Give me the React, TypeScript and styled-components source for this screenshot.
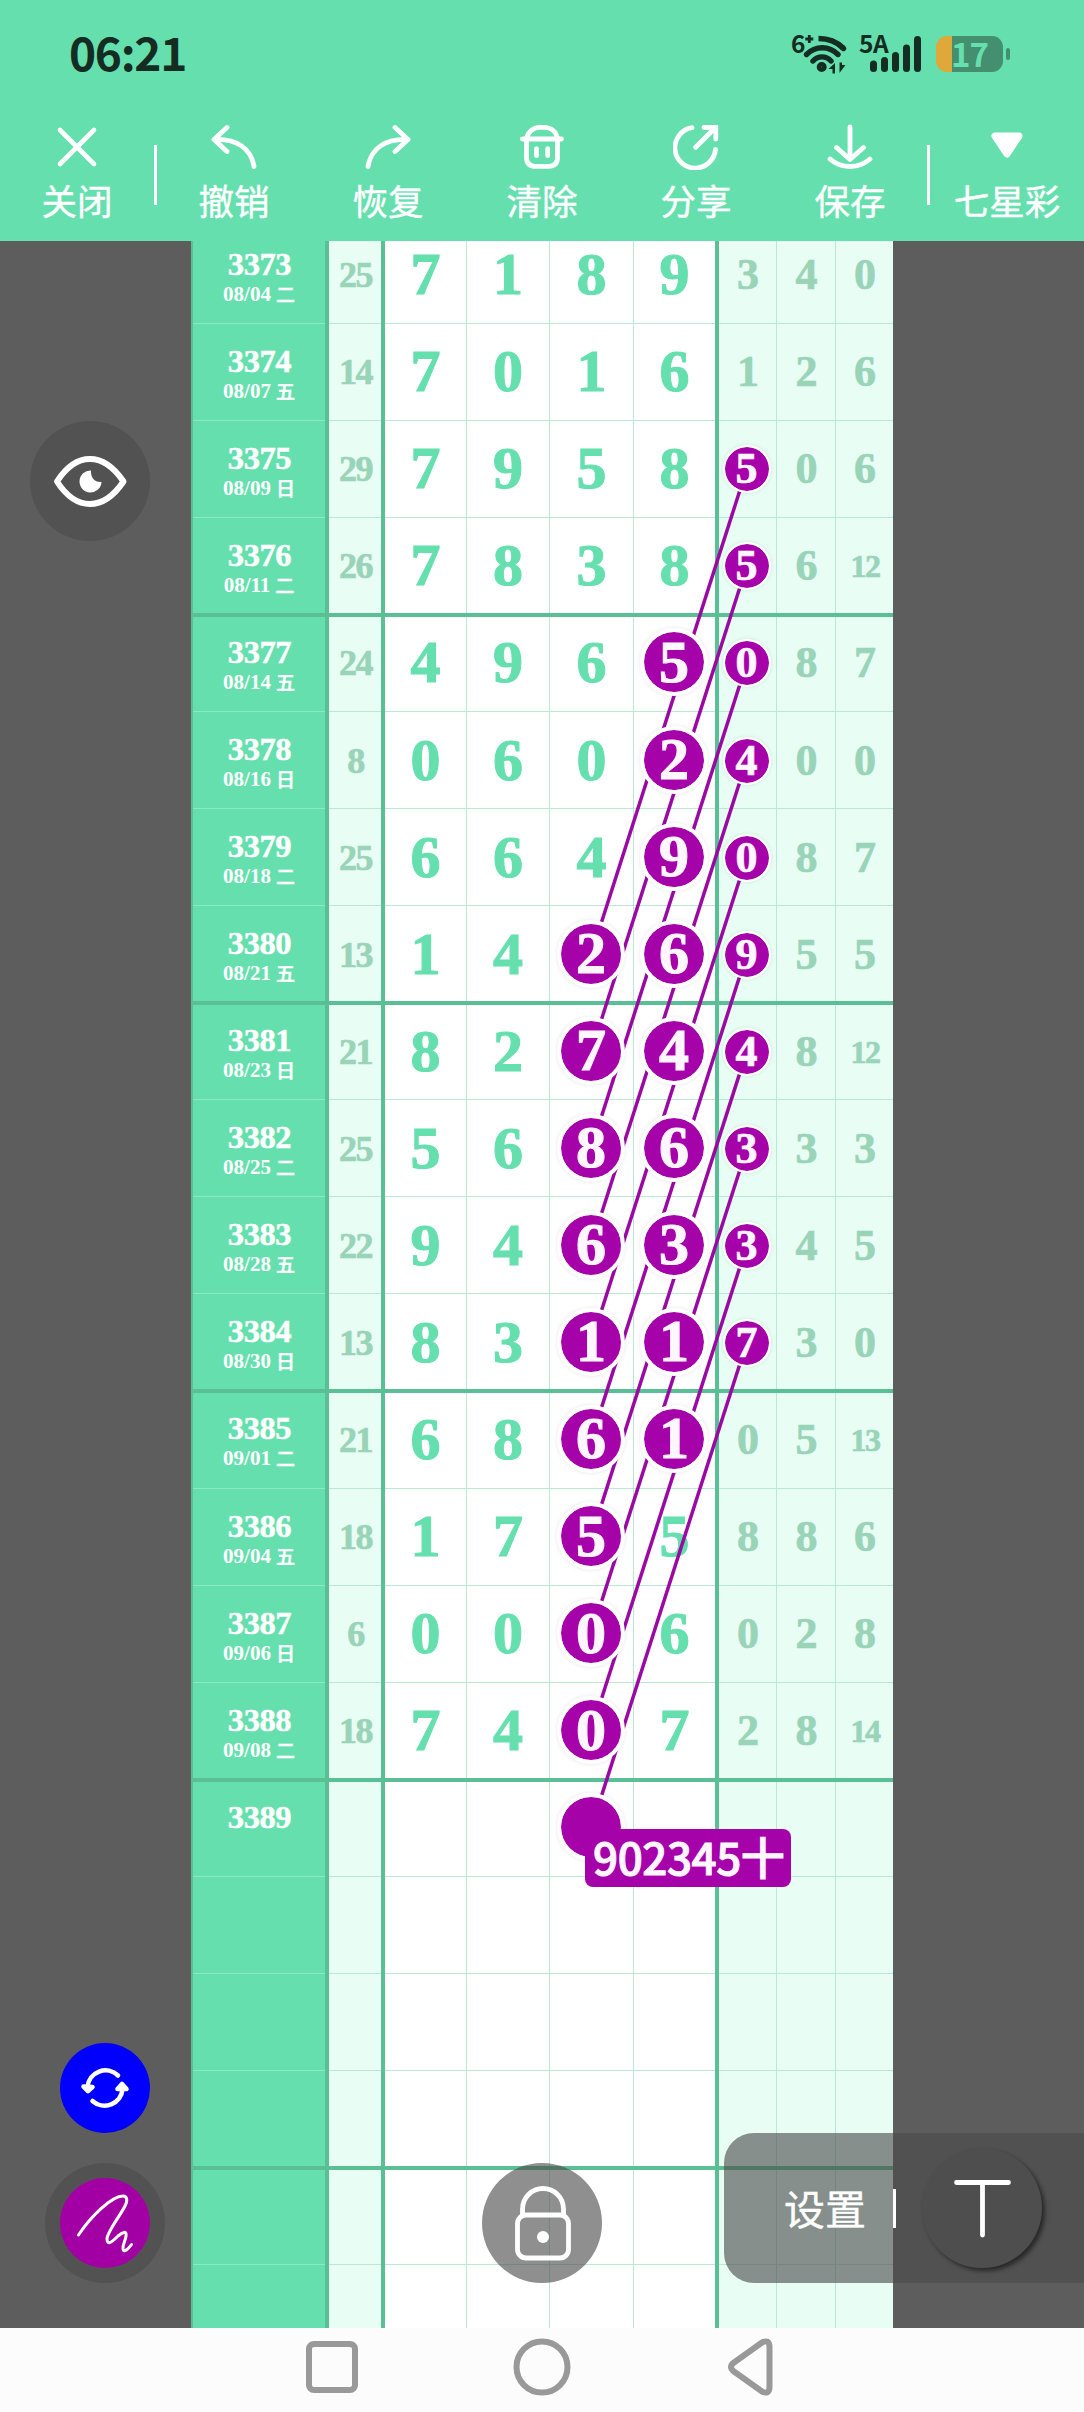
import React from "react";
import styled, { createGlobalStyle, css } from "styled-components";

const GREEN = "#66dfaf";
const EDGE = "#5abf94";
const HAIR = "#b9e8d3";
const TINT = "#e8fef4";
const PURPLE = "#a502aa";
const VEIL = "rgba(75, 75, 75, 0.62)";
const SANS = '"Noto Sans CJK SC", "Noto Sans", sans-serif';
const SERIF = '"Liberation Serif", "Noto Sans CJK SC", serif';

const ROW_H = 97.07;
const TABLE_TOP = -14.3;

const Global = createGlobalStyle`
  * { box-sizing: border-box; }
  body { margin: 0; background: #fcfcfc; font-family: ${SANS}; }
`;

const Screen = styled.div`
  display: flex;
  flex-direction: column;
  width: 1084px;
  height: 2412px;
  overflow: hidden;
`;

const Header = styled.header`
  flex: none;
  height: 241px;
  background: ${GREEN};
  color: #fff;
`;

const StatusBar = styled.div`
  display: flex;
  justify-content: space-between;
  align-items: center;
  height: 108px;
  padding: 0 74px 0 69px;
  color: #142c21;
`;

const Clock = styled.span`
  padding-bottom: 6px;
  font-size: 46px;
  line-height: 50px;
  font-weight: 700;
  letter-spacing: -1.3px;
`;

const StatusIcons = styled.div`
  display: flex;
  align-items: center;
`;

const IconWrap = styled.div<{ $w: number; $gap: number }>`
  position: relative;
  width: ${(p) => p.$w}px;
  height: 40px;
  margin-right: ${(p) => p.$gap}px;
  svg { display: block; }
`;

const TinyTag = styled.span`
  position: absolute;
  left: -1px;
  top: -1px;
  font-size: 24.5px;
  line-height: 20px;
  font-weight: 700;
  letter-spacing: -0.5px;
`;

const Battery = styled.div`
  display: flex;
  align-items: center;
  justify-content: center;
  width: 67px;
  height: 36px;
  padding-bottom: 2px;
  border-radius: 11px;
  background: linear-gradient(90deg, #dfa83a 0 16px, #438f70 16px);
  color: ${GREEN};
  font-size: 33px;
  line-height: 34px;
  font-weight: 700;
  letter-spacing: -1px;
`;

const BatteryNub = styled.div`
  width: 4px;
  height: 12px;
  margin-left: 3px;
  border-radius: 2px;
  background: #438f70;
`;

const Toolbar = styled.nav`
  display: flex;
  height: 133px;
`;

const Tool = styled.button`
  display: flex;
  flex: 1;
  flex-direction: column;
  align-items: center;
  padding: 16px 0 0;
  border: 0;
  background: none;
  color: inherit;
  font: 400 35.5px/50px ${SANS};
  white-space: nowrap;
  -webkit-text-stroke: 0.4px currentColor;
  svg { display: block; margin-bottom: 5px; }
`;

const ToolDivider = styled.div`
  width: 3px;
  height: 60px;
  margin-top: 37px;
  background: #fff;
`;

const Stage = styled.main`
  position: relative;
  flex: none;
  height: 2087px;
  overflow: hidden;
  background: #5d5d5d;
`;

const Table = styled.div`
  position: relative;
  width: 702px;
  margin: ${TABLE_TOP}px auto 0;
  background: #fff;
`;

const Row = styled.div<{ $thick: boolean }>`
  position: relative;
  display: grid;
  grid-template-columns: 138px 56px 82px 83px 84px 85px 58px 59px 57px;
  height: ${ROW_H}px;
  ${(p) =>
    p.$thick &&
    css`
      &::after {
        content: "";
        position: absolute;
        left: 2px;
        right: 0;
        bottom: -2px;
        height: 4px;
        background: ${EDGE};
        z-index: 1;
      }
    `}
`;

const IssueCell = styled.div`
  display: flex;
  flex-direction: column;
  align-items: center;
  padding-top: 21px;
  border-left: 2px solid ${EDGE};
  border-right: 4px solid ${EDGE};
  background: linear-gradient(#8ee8c5, #8ee8c5) bottom / 100% 1px no-repeat ${GREEN};
  color: #fff;
  font-family: ${SERIF};
  font-weight: 700;
`;

const IssueNo = styled.div`
  padding-left: 1px;
  font-size: 32.5px;
  line-height: 32px;
  letter-spacing: -0.4px;
  -webkit-text-stroke: 0.5px currentColor;
`;

const IssueDate = styled.div`
  display: flex;
  align-items: center;
  gap: 5px;
  font-size: 21px;
  line-height: 28px;
`;

const Weekday = styled.span`
  font-family: ${SANS};
  font-size: 19px;
  font-weight: 500;
  -webkit-text-stroke: 0.5px currentColor;
`;

const Cell = styled.div<{ $tint?: boolean; $edge?: "thick" | "hair" | "none"; $size: number; $light?: boolean; $tight?: boolean }>`
  display: flex;
  align-items: center;
  justify-content: center;
  padding-bottom: ${(p) => (p.$light ? 0 : 2)}px;
  padding-left: ${(p) => (p.$light ? 1 : 0)}px;
  border-right: ${(p) => (p.$edge === "thick" ? `4px solid ${EDGE}` : p.$edge === "none" ? "0" : `1px solid ${HAIR}`)};
  background: linear-gradient(${HAIR}, ${HAIR}) bottom / 100% 1px no-repeat ${(p) => (p.$tint ? TINT : "#fff")};
  color: ${(p) => (p.$light ? "#99d4b8" : GREEN)};
  font-family: ${SERIF};
  font-size: ${(p) => p.$size}px;
  line-height: 1;
  font-weight: 700;
  letter-spacing: ${(p) => (p.$tight ? "-1.6px" : "0")};
  -webkit-text-stroke: ${(p) => (p.$size > 50 ? 1.1 : 0.7)}px currentColor;
`;

const Marker = styled.span<{ $small?: boolean }>`
  position: relative;
  z-index: 3;
  display: flex;
  flex: none;
  align-items: center;
  justify-content: center;
  width: ${(p) => (p.$small ? 48 : 68)}px;
  height: ${(p) => (p.$small ? 48 : 68)}px;
  margin-left: ${(p) => (p.$small ? "-3px" : "-1px")};
  padding-bottom: ${(p) => (p.$small ? 0 : 1)}px;
  border: ${(p) => (p.$small ? "2.5px" : "4px")} solid #fff;
  border-radius: 50%;
  background: ${PURPLE};
  background-clip: padding-box;
  box-shadow: 0 0 4px rgba(0, 0, 0, 0.1);
  color: #fff6ff;
`;

const Trails = styled.svg`
  position: absolute;
  left: 0;
  top: 0;
  z-index: 2;
`;

const NoteLabel = styled.div`
  position: absolute;
  left: 394px;
  top: 1602px;
  z-index: 4;
  width: 206px;
  height: 58px;
  padding-left: 8px;
  border-radius: 8px;
  background: ${PURPLE};
  color: #fff6ff;
  font: 500 44px/54px ${SANS};
  letter-spacing: -0.45px;
  white-space: nowrap;
  -webkit-text-stroke: 1px currentColor;
`;

const RoundButton = styled.button<{ $x: number; $y: number; $r: number; $bg: string }>`
  position: absolute;
  z-index: 5;
  left: ${(p) => p.$x - p.$r}px;
  top: ${(p) => p.$y - p.$r}px;
  display: flex;
  align-items: center;
  justify-content: center;
  width: ${(p) => p.$r * 2}px;
  height: ${(p) => p.$r * 2}px;
  padding: 0;
  border: 0;
  border-radius: 50%;
  background: ${(p) => p.$bg};
`;

const PenDot = styled.span`
  display: flex;
  width: 90px;
  height: 90px;
  border-radius: 50%;
  background: #a200a5;
`;

const SettingsPanel = styled.div`
  position: absolute;
  z-index: 5;
  right: 0;
  top: 1892px;
  display: flex;
  align-items: center;
  width: 360px;
  height: 150px;
  padding-left: 60px;
  border-radius: 30px 0 0 30px;
  background: ${VEIL};
  color: #fff;
`;

const SettingsText = styled.span`
  width: 83px;
  padding-bottom: 2px;
  font: 400 41px/60px ${SANS};
  -webkit-text-stroke: 0.4px currentColor;
`;

const SettingsBar = styled.span`
  width: 3px;
  height: 39px;
  margin: 0 26px 0 26px;
  background: #fff;
`;

const TextTool = styled.span`
  display: flex;
  width: 120px;
  height: 120px;
  border-radius: 50%;
  background: #4e4e4e;
  box-shadow: 3px 3px 4px rgba(0, 0, 0, 0.5);
`;

const NavBar = styled.footer`
  display: flex;
  justify-content: center;
  gap: 152px;
  height: 84px;
  padding-top: 9px;
  background: #fcfcfc;
`;

type Draw = {
  issue: string;
  date?: string;
  day?: string;
  sum?: string;
  main: string[];
  extra: string[];
};

const d = (issue: number, date: string, day: string, sum: number, main: string, extra: string): Draw => ({
  issue: String(issue),
  date,
  day,
  sum: String(sum),
  main: main.split(""),
  extra: extra.split(" "),
});

const blank = (issue = ""): Draw => ({ issue, main: ["", "", "", ""], extra: ["", "", ""] });

const draws: Draw[] = [
  d(3373, "08/04", "二", 25, "7189", "3 4 0"),
  d(3374, "08/07", "五", 14, "7016", "1 2 6"),
  d(3375, "08/09", "日", 29, "7958", "5 0 6"),
  d(3376, "08/11", "二", 26, "7838", "5 6 12"),
  d(3377, "08/14", "五", 24, "4965", "0 8 7"),
  d(3378, "08/16", "日", 8, "0602", "4 0 0"),
  d(3379, "08/18", "二", 25, "6649", "0 8 7"),
  d(3380, "08/21", "五", 13, "1426", "9 5 5"),
  d(3381, "08/23", "日", 21, "8274", "4 8 12"),
  d(3382, "08/25", "二", 25, "5686", "3 3 3"),
  d(3383, "08/28", "五", 22, "9463", "3 4 5"),
  d(3384, "08/30", "日", 13, "8311", "7 3 0"),
  d(3385, "09/01", "二", 21, "6861", "0 5 13"),
  d(3386, "09/04", "五", 18, "1755", "8 8 6"),
  d(3387, "09/06", "日", 6, "0006", "0 2 8"),
  d(3388, "09/08", "二", 18, "7407", "2 8 14"),
  blank("3389"),
  blank(),
  blank(),
  blank(),
  blank(),
  blank(),
];

/* Row ranges that carry a marker, keyed by number column. */
const marked: Record<number, [number, number]> = { 2: [7, 16], 3: [4, 12], 4: [2, 11] };
const isMarked = (col: number, row: number) => !!marked[col] && row >= marked[col][0] && row <= marked[col][1];

const trailStarts = Array.from({ length: 10 }, (_, i) => i + 2);
const rowCenter = (row: number) => (row + 0.5) * ROW_H;

const line = { fill: "none", stroke: "#fff", strokeLinecap: "round" as const, strokeLinejoin: "round" as const };

const CloseIcon = () => (
  <svg width="46" height="46" {...line} strokeWidth="4.6"><path d="M6 6l34 34M40 6L6 40" /></svg>
);
const UndoIcon = () => (
  <svg width="46" height="46" {...line} strokeWidth="4.8"><path d="M16 3.500L3 15.500l13 12M3 15.500c23-1 37 9 40 27" /></svg>
);
const RedoIcon = () => (
  <svg width="46" height="46" {...line} strokeWidth="4.8"><path d="M30 3.500l13 12-13 12M43 15.500C20 14.500 6 24.500 3 42.500" /></svg>
);
const TrashIcon = () => (
  <svg width="46" height="46" {...line} strokeWidth="4.8">
    <path d="M3.500 15h39M7.500 15C9 7 15 3.300 21 3.300h4c7 0 12.500 4 13.500 11.700v18.500c0 6-3 8.800-9 8.800h-13c-6 0-9-2.800-9-8.800zM17.500 24.700v7M28.700 24.700v7" />
  </svg>
);
const ShareIcon = () => (
  <svg width="46" height="46" {...line} strokeWidth="4.8">
    <path d="M19 3.700A20.300 20.300 0 1 0 42.500 25.300M22.700 23.300L42 4" />
    <path d="M31 3.500h11.800V15" strokeLinejoin="miter" />
  </svg>
);
const SaveIcon = () => (
  <svg width="46" height="46" {...line} strokeWidth="4.8">
    <path d="M23 3v32M9.500 23.500L23 35.500l13.500-12M3 35c11 10 29 10 40 0" />
  </svg>
);
const CaretIcon = () => (
  <svg width="46" height="46" fill="#fff" stroke="#fff" strokeWidth="7" strokeLinejoin="round">
    <path d="M11 12h24L23 30z" />
  </svg>
);

const WifiIcon = () => (
  <svg width="56" height="40" fill="none" stroke="#142c21" strokeWidth="5.4" strokeLinecap="round">
    <path d="M26.500 4.500c9 0 18 3 24.500 9.500" strokeLinecap="butt" />
    <path d="M50.500 13.500l1 1" />
    <path d="M14.500 20.500c9-9 22.500-9 31.500 0M21 27c5-5.500 13-5.500 18 0" />
    <circle cx="29.700" cy="33" r="2.300" />
    <path d="M13.300 5h8M17.300 1v8" strokeWidth="2.800" strokeLinecap="butt" />
    <path d="M36.500 35l6.500-6v10.500h-2.500V35zM53.500 31l-6 8V28.500h2.500V31z" fill="#142c21" stroke="none" />
  </svg>
);
const SignalIcon = () => (
  <svg width="62" height="40" fill="#142c21">
    <rect x="10" y="26.500" width="7" height="11.500" rx="3.500" />
    <rect x="21" y="23" width="7" height="15" rx="3.500" />
    <rect x="32" y="18" width="7" height="20" rx="3.500" />
    <rect x="43" y="10.500" width="7" height="27.500" rx="3.500" />
    <rect x="54" y="2" width="7" height="36" rx="3.500" />
  </svg>
);

const EyeIcon = () => (
  <svg width="80" height="60" fill="none" stroke="#fff" strokeWidth="6" strokeLinejoin="round">
    <path d="M7 30.500C16 16.500 27 8 40 8S64 16.500 73.500 30.500C64 44.500 53 53 40 53S16 44.500 7 30.500z" />
    <path d="M41 19.500a11 11 0 1 0 10.500 11.500C45 31.500 40.500 27 41 19.500z" fill="#fff" stroke="none" />
  </svg>
);
const SwapIcon = () => (
  <svg width="60" height="60" {...line} strokeWidth="4.6">
    <path d="M43 17.500A18 18 0 0 0 12.500 29M17.500 43a18 18 0 0 0 30-12" />
    <path d="M8.500 28.500l4.500 4.500 4.500-4zM42.500 31l4.500-5 4.500 5z" fill="#fff" />
  </svg>
);
const PenIcon = () => (
  <svg width="90" height="90" {...line} strokeWidth="3">
    <path d="M18.500 57C31 38 52 18 63 18c4 0 5 4 2 10C60 38 47 54 47 61c0 8 7 1 11-3 4-3.500 9-6 8 0-.500 5-3.500 8-3 13 .500 4 5 .500 8.500-4.500" />
  </svg>
);
const LockIcon = () => (
  <svg width="60" height="80" fill="none" stroke="#fff" strokeWidth="4.800">
    <rect x="5.500" y="32" width="51" height="43" rx="8.500" />
    <path d="M10.500 32.500V26a20.300 20.300 0 0 1 41 0v6.500" />
    <circle cx="31" cy="54" r="6" fill="#fff" stroke="none" />
  </svg>
);
const TextToolIcon = () => (
  <svg width="120" height="120" {...line} strokeWidth="4.800"><path d="M34.500 34.500h52M60.500 34.500V87" /></svg>
);

const tools = [
  { label: "撤销", Icon: UndoIcon },
  { label: "恢复", Icon: RedoIcon },
  { label: "清除", Icon: TrashIcon },
  { label: "分享", Icon: ShareIcon },
  { label: "保存", Icon: SaveIcon },
];

function DrawRow({ draw, row }: { draw: Draw; row: number }) {
  return (
    <Row $thick={row % 4 === 3}>
      <IssueCell>
        <IssueNo>{draw.issue}</IssueNo>
        {draw.date && (
          <IssueDate>
            {draw.date}
            <Weekday>{draw.day}</Weekday>
          </IssueDate>
        )}
      </IssueCell>
      <Cell $tint $light $edge="thick" $size={36} $tight>{draw.sum}</Cell>
      {draw.main.map((n, i) => (
        <Cell key={i} $size={60} $edge={i === 3 ? "thick" : "hair"}>
          {isMarked(i, row) ? <Marker>{n}</Marker> : n}
        </Cell>
      ))}
      {draw.extra.map((n, i) => (
        <Cell key={i} $tint $light $size={n.length > 1 ? 32 : 44} $tight={n.length > 1} $edge={i === 2 ? "none" : "hair"}>
          {isMarked(i + 4, row) ? <Marker $small>{n}</Marker> : n}
        </Cell>
      ))}
    </Row>
  );
}

export default function App() {
  return (
    <Screen>
      <Global />
      <Header>
        <StatusBar>
          <Clock>06:21</Clock>
          <StatusIcons>
            <IconWrap $w={56} $gap={12}><TinyTag>6</TinyTag><WifiIcon /></IconWrap>
            <IconWrap $w={62} $gap={14}><TinyTag>5A</TinyTag><SignalIcon /></IconWrap>
            <Battery>17</Battery>
            <BatteryNub />
          </StatusIcons>
        </StatusBar>
        <Toolbar>
          <Tool><CloseIcon />关闭</Tool>
          <ToolDivider />
          {tools.map(({ label, Icon }) => (
            <Tool key={label}><Icon />{label}</Tool>
          ))}
          <ToolDivider />
          <Tool><CaretIcon />七星彩</Tool>
        </Toolbar>
      </Header>

      <Stage>
        <Table>
          {draws.map((draw, row) => (
            <DrawRow key={row} draw={draw} row={row} />
          ))}
          <Trails width={702} height={ROW_H * 22} stroke="#9a0aa3" strokeWidth={3.5}>
            {trailStarts.map((r) => (
              <line key={r} x1={555.5} y1={rowCenter(r)} x2={400} y2={rowCenter(r + 5)} />
            ))}
          </Trails>
          <NoteLabel>902345十</NoteLabel>
        </Table>

        <RoundButton $x={90} $y={240} $r={60} $bg="#525252"><EyeIcon /></RoundButton>
        <RoundButton $x={105} $y={1847} $r={45} $bg="#0000fc"><SwapIcon /></RoundButton>
        <RoundButton $x={105} $y={1982} $r={60} $bg="#525252"><PenDot><PenIcon /></PenDot></RoundButton>
        <RoundButton $x={542} $y={1982} $r={60} $bg={VEIL}><LockIcon /></RoundButton>
        <SettingsPanel>
          <SettingsText>设置</SettingsText>
          <SettingsBar />
          <TextTool><TextToolIcon /></TextTool>
        </SettingsPanel>
      </Stage>

      <NavBar>
        <svg width="60" height="62" fill="none" stroke="#999" strokeWidth="6"><rect x="9" y="7" width="46" height="46" rx="5" /></svg>
        <svg width="60" height="62" fill="none" stroke="#999" strokeWidth="6"><circle cx="30" cy="30" r="25.500" /></svg>
        <svg width="60" height="62" fill="none" stroke="#999" strokeWidth="6" strokeLinejoin="round">
          <path d="M38 5.500L10 25.500q-6 4.500 0 9L38 54.500q7 3.500 7.500-4V9.500q-.500-7.500-7.500-4z" />
        </svg>
      </NavBar>
    </Screen>
  );
}
